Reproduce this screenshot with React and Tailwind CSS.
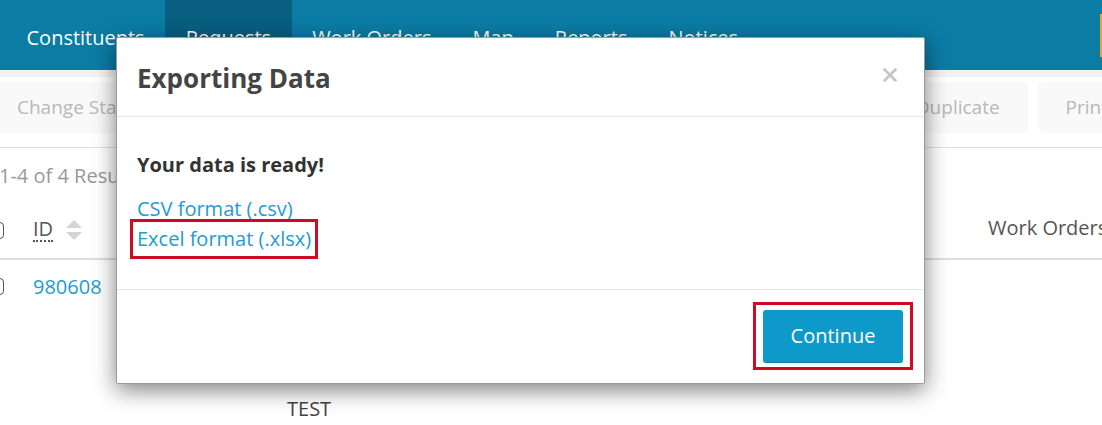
import { X } from "lucide-react"

const tabs = ["Constituents", "Requests", "Work Orders", "Map", "Reports", "Notices"]

function SortArrows() {
  return (
    <svg width="18" height="22" viewBox="0 0 18 22" className="ml-[12px]">
      <path d="M1 9 L9 1 L17 9 Z" fill="#d4d4d4" />
      <path d="M1 13 L9 21 L17 13 Z" fill="#d4d4d4" />
    </svg>
  )
}

function Checkbox() {
  return <div className="-ml-[14px] w-[18px] h-[17px] rounded-[4px] border border-[#555]" />
}

export default function App() {
  return (
    <div className="relative w-[1102px] h-[425px] overflow-hidden bg-white font-['Open_Sans',sans-serif]">
      {/* top nav */}
      <nav className="flex items-center justify-between h-[70px] bg-[#0b7ca4] shadow-[0_1px_2px_rgba(0,0,0,0.3)]">
        <ul className="flex h-full pl-[6px]">
          {tabs.map((t) => (
            <li
              key={t}
              className={`flex items-center h-full pt-[5px] px-[20.5px] text-[20px] text-white ${
                t === "Requests" ? "bg-[#085f80]" : ""
              }`}
            >
              {t}
            </li>
          ))}
        </ul>
        <div className="w-[2px] h-[43px] bg-[#e8a33a]" />
      </nav>

      {/* toolbar */}
      <div className="h-[7px] bg-[#f3f3f3]" />
      <div className="flex gap-[10px] -ml-[11px] -mr-[34px] pt-[5px] pb-[14px] border-b border-[#e0e0e0] text-[19px] text-[#b8b8b8]">
        <div className="h-[51px] flex items-center px-[28px] rounded-[5px] bg-[#f9f9f9]">Change Status</div>
        <div className="flex-1" />
        <div className="h-[51px] flex items-center px-[28px] rounded-[5px] bg-[#f9f9f9]">Duplicate</div>
        <div className="h-[51px] flex items-center px-[28px] rounded-[5px] bg-[#f9f9f9]">Print</div>
      </div>

      {/* results */}
      <div className="pt-[14px] text-[20px] leading-[28px] text-[#999] -ml-[1px]">1-4 of 4 Results</div>

      <div className="grid grid-cols-[33px_254px_701px_200px] items-center h-[70px] border-b-2 border-[#ddd] text-[20px] text-[#555] pt-[12px]">
        <Checkbox />
        <div className="flex items-center">
          <span className="border-b-2 border-dotted border-[#555] leading-[22px]">ID</span>
          <SortArrows />
        </div>
        <div />
        <div className="-mt-[4px]">Work Orders</div>
      </div>

      <div className="grid grid-cols-[33px_254px_701px_200px] pt-[13px] text-[20px]">
        <div className="pt-[5px]"><Checkbox /></div>
        <div className="text-[#1e9bd0] leading-[28px]">980608</div>
        <div className="pt-[122px] text-[#444] leading-[28px]">TEST</div>
        <div />
      </div>

      {/* modal */}
      <div className="absolute left-[116px] top-[37px] w-[809px] bg-white border border-[#9a9a9a] rounded-[2px] shadow-[0_6px_22px_rgba(0,0,0,0.5)]">
        <div className="flex items-center justify-between h-[79px] pl-[20px] pr-[23px] border-b border-[#e5e5e5]">
          <h2 className="text-[26px] font-bold text-[#444] pt-[2px]">Exporting Data</h2>
          <X className="w-[22px] h-[22px] text-[#c6c6c6] -mt-[4px]" strokeWidth={3} />
        </div>
        <div className="pl-[20px] pt-[34px] pb-[30px] text-[20px]">
          <p className="font-bold text-[#333] leading-[28px]">Your data is ready!</p>
          <a className="block mt-[16px] text-[#1e9bd0] leading-[28px]">CSV format (.csv)</a>
          <a className="inline-block -ml-[7px] -mt-[4px] px-[4px] py-[3px] border-[3px] border-[#cf0a25] text-[#1e9bd0] leading-[28px]">
            Excel format (.xlsx)
          </a>
        </div>
        <div className="flex justify-end pt-[12px] pb-[13px] pr-[11px] border-t border-[#e5e5e5]">
          <div className="border-[3px] border-[#cf0a25] px-[7px] pt-[5px] pb-[4px]">
            <button className="w-[140px] h-[53px] rounded-[3px] bg-[#0e99cb] border-b border-[#0b86b2] text-white text-[20px]">
              Continue
            </button>
          </div>
        </div>
      </div>
    </div>
  )
}
